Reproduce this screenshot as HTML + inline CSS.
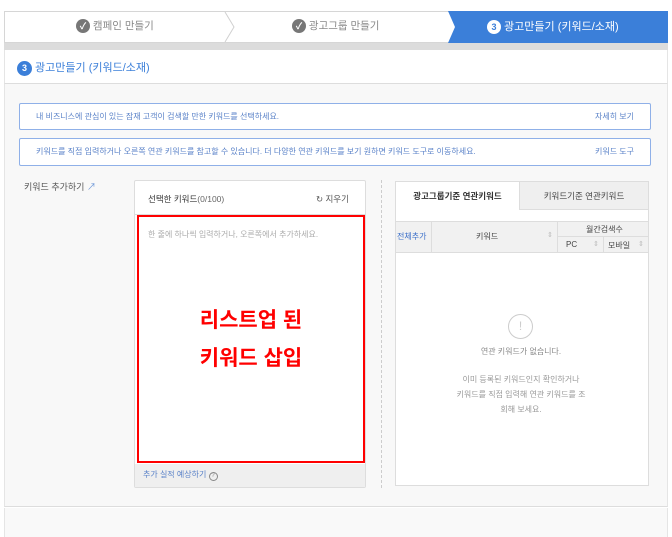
<!DOCTYPE html>
<html><head><meta charset="utf-8"><style>
*{box-sizing:border-box;margin:0;padding:0}
body{width:672px;height:537px;background:#fff;font-family:"Liberation Sans","Noto Sans CJK KR",sans-serif;position:relative;overflow:hidden;font-size:9px;color:#333}
.a{position:absolute}
.circ{display:inline-block;width:14px;height:14px;border-radius:50%;text-align:center;line-height:14px;font-size:9px;font-weight:bold;vertical-align:middle}
</style></head><body>
<div class="a" style="left:4px;top:11px;width:664px;height:32px;border:1px solid #d6d6d6;background:#fff"></div>
<svg class="a" style="left:4px;top:11px" width="664" height="32">
<polyline points="221,1 230,16 221,31" fill="none" stroke="#d0d0d0"/>
<polygon points="444,0 664,0 664,32 444,32 451,16" fill="#3b7fd9"/>
</svg>
<div class="a" style="left:76px;top:18px;font-size:10.5px;color:#888"><span class="circ" style="background:#777;color:#fff">✓</span> 캠페인 만들기</div>
<div class="a" style="left:292px;top:18px;font-size:10.5px;color:#888"><span class="circ" style="background:#777;color:#fff">✓</span> 광고그룹 만들기</div>
<div class="a" style="left:487px;top:18px;font-size:11px;color:#fff"><span class="circ" style="background:#fff;color:#3b7fd9">3</span> 광고만들기 (키워드/소재)</div>
<div class="a" style="left:4px;top:43px;width:664px;height:7px;background:#dcdcdc"></div>
<div class="a" style="left:4px;top:50px;width:664px;height:34px;background:#fff;border-bottom:1px solid #ddd;border-left:1px solid #e5e5e5;border-right:1px solid #e5e5e5"></div>
<div class="a" style="left:17px;top:59px;font-size:11px;color:#3b7fd9"><span class="circ" style="background:#3b7fd9;color:#fff;width:15px;height:15px;line-height:15px">3</span> 광고만들기 (키워드/소재)</div>
<div class="a" style="left:4px;top:84px;width:664px;height:423px;background:#f8f8f8;border-left:1px solid #e5e5e5;border-right:1px solid #e5e5e5;border-bottom:1px solid #ddd"></div>
<div class="a" style="left:19px;top:103px;width:632px;height:27px;border:1px solid #8fb0e8;border-radius:2px;background:#fff;color:#5a82c8;font-size:8px;line-height:25px;padding:0 16px">내 비즈니스에 관심이 있는 잠재 고객이 검색할 만한 키워드를 선택하세요.<span style="float:right;padding-right:0">자세히 보기</span></div>
<div class="a" style="left:19px;top:138px;width:632px;height:28px;border:1px solid #8fb0e8;border-radius:2px;background:#fff;color:#5a82c8;font-size:8px;line-height:26px;padding:0 16px">키워드를 직접 입력하거나 오른쪽 연관 키워드를 참고할 수 있습니다. 더 다양한 연관 키워드를 보기 원하면 키워드 도구로 이동하세요.<span style="float:right">키워드 도구</span></div>
<div class="a" style="left:24px;top:180px;font-size:9px;color:#555">키워드 추가하기 <span style="color:#6a95d8">↗</span></div>
<div class="a" style="left:134px;top:180px;width:232px;height:308px;border:1px solid #ddd;background:#fff;border-radius:2px"></div>
<div class="a" style="left:148px;top:193px;font-size:8.5px;color:#333">선택한 키워드<span style="color:#666">(0/100)</span></div>
<div class="a" style="left:316px;top:193px;font-size:8.5px;color:#555">↻ 지우기</div>
<div class="a" style="left:134px;top:214px;width:232px;height:1px;background:#ddd"></div>
<div class="a" style="left:137px;top:215px;width:228px;height:248px;border:2px solid #f00;background:#fff"></div>
<div class="a" style="left:148px;top:229px;font-size:8px;color:#aaa">한 줄에 하나씩 입력하거나, 오른쪽에서 추가하세요.</div>
<div class="a" style="left:137px;top:302px;width:228px;text-align:center;color:#f00;font-size:21px;font-weight:bold;line-height:38px">리스트업 된<br>키워드 삽입</div>
<div class="a" style="left:135px;top:464px;width:230px;height:23px;background:#efefef"></div>
<div class="a" style="left:143px;top:469px;font-size:8px;color:#5a82c8">추가 실적 예상하기 <span style="display:inline-block;width:9px;height:9px;border:1px solid #888;border-radius:50%;font-size:6px;line-height:7px;text-align:center;color:#888">?</span></div>
<div class="a" style="left:381px;top:180px;height:308px;border-left:1px dashed #ccc"></div>
<div class="a" style="left:395px;top:181px;width:254px;height:305px;border:1px solid #ddd;background:#fff"></div>
<div class="a" style="left:519px;top:182px;width:129px;height:28px;background:#efefef;border-left:1px solid #ddd;border-bottom:1px solid #ddd;text-align:center;line-height:28px;font-size:8.5px;color:#444">키워드기준 연관키워드</div>
<div class="a" style="left:396px;top:182px;width:123px;height:28px;text-align:center;line-height:28px;font-size:8.5px;font-weight:bold;color:#333">광고그룹기준 연관키워드</div>
<div class="a" style="left:396px;top:221px;width:252px;height:32px;background:#f1f1f1;border-top:1px solid #ddd;border-bottom:1px solid #ddd"></div>
<div class="a" style="left:431px;top:221px;width:1px;height:32px;background:#ddd"></div>
<div class="a" style="left:557px;top:221px;width:1px;height:32px;background:#ddd"></div>
<div class="a" style="left:558px;top:236px;width:90px;height:1px;background:#ddd"></div>
<div class="a" style="left:603px;top:237px;width:1px;height:16px;background:#ddd"></div>
<div class="a" style="left:397px;top:231px;font-size:8px;color:#3b6fc9">전체추가</div>
<div class="a" style="left:476px;top:231px;font-size:8px;color:#444">키워드</div>
<div class="a" style="left:547px;top:231px;font-size:7px;color:#bbb">⇕</div>
<div class="a" style="left:586px;top:224px;font-size:8px;color:#444">월간검색수</div>
<div class="a" style="left:566px;top:240px;font-size:8px;color:#444">PC</div>
<div class="a" style="left:593px;top:240px;font-size:7px;color:#bbb">⇕</div>
<div class="a" style="left:608px;top:240px;font-size:8px;color:#444">모바일</div>
<div class="a" style="left:638px;top:240px;font-size:7px;color:#bbb">⇕</div>
<div class="a" style="left:508px;top:314px;width:25px;height:25px;border:1px solid #ccc;border-radius:50%;text-align:center;line-height:23px;font-size:12px;color:#ccc">!</div>
<div class="a" style="left:398px;top:346px;width:246px;text-align:center;font-size:8px;color:#888">연관 키워드가 없습니다.</div>
<div class="a" style="left:398px;top:372px;width:246px;text-align:center;font-size:8px;color:#999;line-height:15px">이미 등록된 키워드인지 확인하거나<br>키워드를 직접 입력해 연관 키워드를 조<br>회해 보세요.</div>
<div class="a" style="left:4px;top:508px;width:664px;height:29px;background:#f9f9f9;border-left:1px solid #e5e5e5;border-right:1px solid #e5e5e5"></div>
</body></html>
